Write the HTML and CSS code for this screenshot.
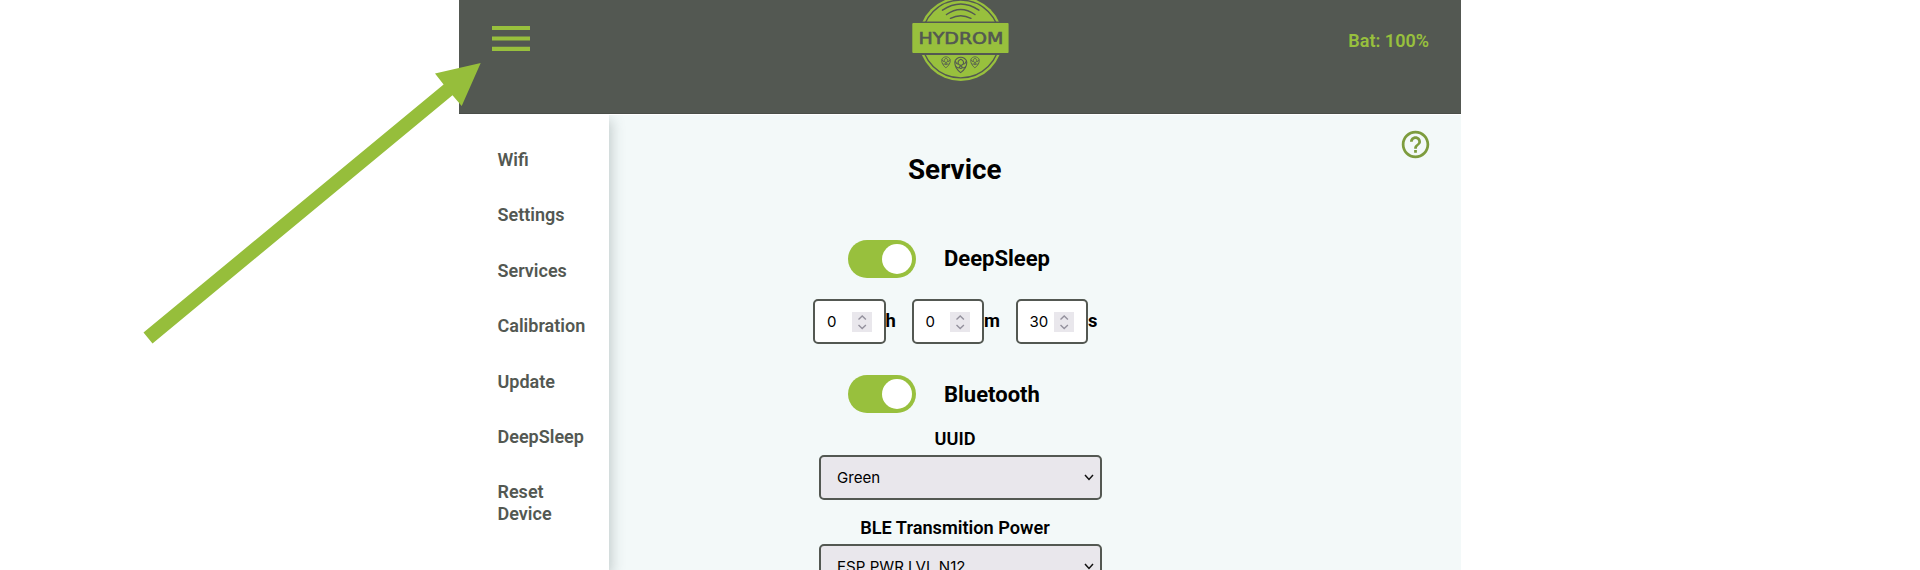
FILE: index.html
```
<!DOCTYPE html>
<html lang="en">
<head>
<meta charset="utf-8">
<title>Hydrom - Service</title>
<link rel="stylesheet" href="styles.css">
</head>
<body>
<div class="app">
  <header class="header">
    <svg class="burger" width="38" height="26" viewBox="0 0 38 26"><path d="M0 0h38v4H0zM0 10.4h38v4.1H0zM0 20.8h38v4.1H0z" fill="#98c03d"/></svg>
    <svg class="logo" width="98" height="82" viewBox="912 0 98 82">
      <circle cx="960.7" cy="39" r="42" fill="#98c03d"/>
      <circle cx="960.7" cy="39" r="38.9" fill="none" stroke="#535852" stroke-width="1.4"/>
      <path d="M912 21.6h98v33.4h-98z" fill="#535852"/>
      <rect x="912.3" y="23" width="96.3" height="30" rx="1" fill="#98c03d"/>
      <g fill="none" stroke="#535852" stroke-width="1.5" stroke-linecap="round">
        <path d="M942.5 10.2q18.2-12.500 36.4 0M946.5 14.5q14.2-10 28.4 0M950.5 18.3q10.2-5.2 20.4 0"/>
      </g>
      <text x="918.4" y="44" textLength="85" lengthAdjust="spacingAndGlyphs" class="logo-text">HYDROM</text>
      <defs>
        <g id="hop" fill="none" stroke="#535852" stroke-width="1.1">
          <path d="M0-7.5C-2-7.5-6-6-6-2.5S-4 5-.2 7.8C4 5 6 1 6-2.5S2-7.5 0-7.5z"/>
          <path d="M-5.5-3.5Q-4 0-2.5-1Q-3.5-4 0-5.5Q3.5-4 2.5-1Q4 0 5.5-3.5M-2.5-1Q0 2 2.5-1M-5 1.5Q-3 4-1.5 2.5Q0 5 1.5 2.5Q3 4 5 1.5M-1.5 2.5L0 .5L1.5 2.5"/>
        </g>
      </defs>
      <use href="#hop" transform="translate(960.8 64.8)"/>
      <use href="#hop" transform="translate(946 62.2) scale(.72)"/>
      <use href="#hop" transform="translate(975 62.2) scale(.72)"/>
    </svg>
    <span class="battery">Bat: 100%</span>
  </header>
  <div class="body">
    <nav class="sidebar">
      <a>Wifi</a><a>Settings</a><a>Services</a><a>Calibration</a><a>Update</a><a>DeepSleep</a><a>Reset Device</a>
    </nav>
    <main class="content">
      <svg class="help" viewBox="0 0 24 24"><path fill="#7d9c3e" d="M11 18h2v-2h-2v2zm1-16C6.480 2 2 6.480 2 12s4.480 10 10 10 10-4.480 10-10S17.520 2 12 2zm0 18c-4.410 0-8-3.590-8-8s3.590-8 8-8 8 3.590 8 8-3.590 8-8 8zm0-14c-2.210 0-4 1.790-4 4h2c0-1.100.9-2 2-2s2 .9 2 2c0 2-3 1.750-3 5h2c0-2.250 3-2.500 3-5 0-2.210-1.790-4-4-4z"/></svg>
      <h1 class="title">Service</h1>
      <div class="switch-row"><span class="toggle"></span><b>DeepSleep</b></div>
      <div class="duration">
        <div class="num"><span class="field"><span>0</span><svg class="spin" viewBox="0 0 20 20"><path d="M6.500 7.500L10.200 4l3.700 3.500M6.500 13l3.700 3.500 3.700-3.500"/></svg></span><b>h</b></div>
        <div class="num"><span class="field"><span>0</span><svg class="spin" viewBox="0 0 20 20"><path d="M6.500 7.500L10.200 4l3.700 3.500M6.500 13l3.700 3.500 3.700-3.500"/></svg></span><b>m</b></div>
        <div class="num"><span class="field"><span>30</span><svg class="spin" viewBox="0 0 20 20"><path d="M6.500 7.500L10.200 4l3.700 3.500M6.500 13l3.700 3.500 3.700-3.500"/></svg></span><b>s</b></div>
      </div>
      <div class="switch-row second"><span class="toggle"></span><b>Bluetooth</b></div>
      <div class="label">UUID</div>
      <div class="select"><span>Green</span><svg width="10" height="7" viewBox="0 0 10 7"><path d="M1 1l4 4.400L9 1"/></svg></div>
      <div class="label power">BLE Transmition Power</div>
      <div class="select"><span>ESP PWR LVL N12</span><svg width="10" height="7" viewBox="0 0 10 7"><path d="M1 1l4 4.400L9 1"/></svg></div>
    </main>
  </div>
</div>
<svg class="arrow" width="490" height="350" viewBox="0 0 490 350"><path d="M480.700 63L435 73.500l8.600 10.900L143.500 332.600l9 10.800L452.500 95.300l9.200 10.800z" fill="#96be3b"/></svg>
</body>
</html>
```
FILE: styles.css
```
* { box-sizing: border-box; }
body { margin: 0; height: 570px; overflow: hidden; background: #fff; font-family: Roboto, sans-serif; }
.app { width: 1002px; height: 570px; margin-left: 459px; display: flex; flex-direction: column; overflow: hidden; }
.header { height: 114px; flex: none; background: #535852; border-bottom: 1px solid #4a4e49; display: flex; align-items: flex-start; }
.burger { margin: 26px 0 0 33px; flex: none; }
.logo { margin-left: 382px; flex: none; }
.logo-text { font: 16.1px "DejaVu Sans", sans-serif; fill: #535852; stroke: #535852; stroke-width: .6; }
.battery { margin: 30px 32px 0 auto; color: #98c03d; font-weight: 600; font-size: 18px; line-height: 22px; white-space: nowrap; }
.body { flex: 1; display: flex; min-height: 0; padding-top: 1px; }
.sidebar { width: 150px; flex: none; background: #fff; padding: 34px 20px 0 38.5px; display: flex; flex-direction: column; gap: 33.7px; box-shadow: 3px 5px 12px rgba(60, 80, 80, .25); clip-path: inset(0 -20px 0 0); z-index: 1; color: #535852; font-weight: 600; font-size: 18px; line-height: 21.7px; }
.content { flex: 1; background: #f3f9f9; position: relative; padding-left: 204px; }
.help { position: absolute; right: 29px; top: 13px; width: 33px; height: 33px; }
.title { margin: 37px 0 0 95px; font-size: 27.8px; line-height: 36px; font-weight: 700; }
.switch-row { display: flex; align-items: center; height: 38px; margin: 52px 0 0 34.5px; font-size: 22px; gap: 28.5px; }
.switch-row b { margin-top: -1px; }
.toggle { width: 68px; height: 38px; border-radius: 19px; background: #98c03d; padding: 4px; display: flex; justify-content: flex-end; }
.toggle::after { content: ""; width: 30px; height: 30px; border-radius: 50%; background: #fff; }
.duration { display: flex; margin: 21px 0 0; height: 45px; }
.num { display: flex; align-items: center; width: 98.5px; font-size: 18.4px; }
.num:nth-child(2) { width: 104px; }
.num b { margin-top: -2px; }
.field { width: 72.5px; height: 45px; border: 2px solid #535852; border-radius: 5px; background: #fff; display: flex; align-items: center; justify-content: space-between; padding: 0 12px; font: 15px Inter, sans-serif; }
.spin { width: 20px; height: 20px; background: #e9e7ec; fill: none; stroke: #94919d; stroke-width: 1.4; }
.switch-row.second { margin-top: 31px; }
.switch-row.second b { margin-top: 0; }
.label { width: 283px; margin: 15px 0 0 .5px; text-align: center; font-size: 18.2px; font-weight: 600; line-height: 22px; white-space: nowrap; }
.label.power { margin-top: 17px; }
.select { width: 283px; height: 45px; margin: 5px 0 0 6px; border: 2px solid #535852; border-radius: 5px; background: #e9e7ec; display: flex; align-items: center; justify-content: space-between; padding: 0 6px 0 16px; font: 15.1px Inter, sans-serif; }
.label.power + .select { margin-top: 5px; }
.select svg { fill: none; stroke: #111; stroke-width: 1.5; }
.arrow { position: absolute; left: 0; top: 0; z-index: 2; }
```
